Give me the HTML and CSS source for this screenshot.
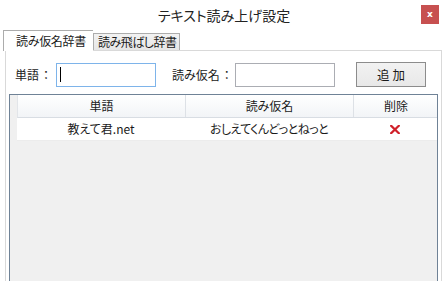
FILE: index.html
```html
<html>
  <head>
    <title>テキスト読み上げ設定</title>
    <meta charset="utf-8">
    <link rel="stylesheet" href="styles.css">
  </head>
  <body>
    <div class="window">
      <div class="titlebar">
        <span></span>
        <span class="title">テキスト読み上げ設定</span>
        <button class="close">x</button>
      </div>

      <div class="tabs">
        <div class="tab selected">読み仮名辞書</div>
        <div class="tab">読み飛ばし辞書</div>
      </div>

      <div class="panel">
        <div class="form-row">
          <label class="label">単語<span class="colon">：</span></label>
          <div class="input focused"><span class="caret"></span></div>
          <label class="label second">読み仮名<span class="colon">：</span></label>
          <div class="input"></div>
          <button class="add">追 加</button>
        </div>

        <div class="grid">
          <div class="grid-header">
            <div class="cell">単語</div>
            <div class="cell">読み仮名</div>
            <div class="cell">削除</div>
          </div>
          <div class="grid-row">
            <div class="cell">教えて君.net</div>
            <div class="cell kana">おしえてくんどっとねっと</div>
            <div class="cell">
              <!-- delete mark -->
              <svg width="10" height="9" viewBox="0 0 10 9">
                <path d="M1.2 0.8 L8.8 8.2 M8.8 0.8 L1.2 8.2" stroke="#d0202a" stroke-width="2.2" stroke-linecap="square"/>
              </svg>
            </div>
          </div>
        </div>
      </div>
    </div>
  </body>
</html>
```

FILE: styles.css
```css
html, body {
  margin: 0;
  padding: 0;
  width: 448px;
  height: 281px;
  overflow: hidden;
  background-color: #ffffff;
}

body {
  font-family: "Noto Sans CJK JP", "Noto Sans", sans-serif;
  font-feature-settings: "palt";
  font-size: 12px;
  color: #1a1a1a;
}

.window {
  display: flex;
  flex-direction: column;
  height: 100%;
}

/* Title bar */
.titlebar {
  display: grid;
  grid-template-columns: 1fr auto 1fr;
  align-items: center;
  height: 30px;
}

.title {
  font-size: 14px;
  color: #222222;
  line-height: 28px;
}

.close {
  justify-self: end;
  margin-right: 9px;
  margin-bottom: 1px;
  width: 18px;
  height: 19px;
  padding: 0;
  border: none;
  background-color: #c75050;
  color: #ffffff;
  font-family: "DejaVu Sans", sans-serif;
  font-size: 9px;
  font-weight: bold;
  line-height: 19px;
}

/* Tabs */
.tabs {
  display: flex;
  align-items: flex-end;
  padding-left: 3px;
  height: 20px;
  position: relative;
  z-index: 1;
}

.tab {
  height: 17px;
  line-height: 16px;
  padding: 0 0 0 4px;
  border: 1px solid #acacac;
  border-bottom: none;
  background: linear-gradient(#f2f2f2, #e6e6e6);
  box-sizing: border-box;
  width: 87px;
  white-space: nowrap;
  overflow: hidden;
  letter-spacing: -0.5px;
}

.tab.selected {
  height: 21px;
  margin-bottom: -1px;
  width: 90px;
  padding-left: 12px;
  line-height: 20px;
  background: #ffffff;
  border-right: none;
  letter-spacing: -0.3px;
}

/* Panel */
.panel {
  flex: 1;
  margin: 0 6px 0 5px;
  border: 1px solid #d9d9d9;
  border-bottom: none;
  background-color: #ffffff;
  display: flex;
  flex-direction: column;
}

.form-row {
  display: flex;
  align-items: center;
  padding: 11px 0 0 9px;
  height: 25px;
}

.label {
  width: 41px;
  white-space: nowrap;
}

.label.second {
  margin-left: 16px;
  width: 63px;
}

.colon {
  font-feature-settings: normal;
  margin-left: 1px;
}

.input {
  box-sizing: border-box;
  width: 100px;
  height: 24px;
  border: 1px solid #abadb3;
  background: #ffffff;
  display: flex;
  align-items: center;
}

.input.focused {
  border-color: #7eb4ea;
}

.caret {
  width: 1px;
  height: 15px;
  margin-left: 3px;
  background: #000000;
}

.add {
  box-sizing: border-box;
  margin-left: 21px;
  width: 70px;
  height: 25px;
  border: 1px solid #8c8c8c;
  background: linear-gradient(#f2f2f2, #e8e8e8);
  font-family: inherit;
  font-feature-settings: "palt";
  font-size: 12.5px;
  color: #1a1a1a;
  padding: 0;
}

/* Data grid */
.grid {
  flex: 1;
  margin: 7px 3px 0 3px;
  border: 1px solid #6f8296;
  border-bottom: none;
  background-color: #f0f0f0;
  padding-left: 7px;
}

.grid-header,
.grid-row {
  display: grid;
  grid-template-columns: 168px 168px 84px;
}

.grid-header {
  height: 22px;
  background: linear-gradient(#ffffff, #f2f4f7);
  border-bottom: 1px solid #d8dde3;
  border-left: 1px solid #e2e5e9;
}

.grid-header .cell {
  border-right: 1px solid #dde1e6;
  line-height: 22px;
}

.grid-header .cell:last-child {
  border-right: none;
}

.grid-row {
  height: 22px;
  background: #ffffff;
  border-bottom: 1px solid #ececec;
}

.cell {
  text-align: center;
  line-height: 22px;
  display: flex;
  align-items: center;
  justify-content: center;
}

.cell.kana {
  letter-spacing: -0.6px;
}
```
